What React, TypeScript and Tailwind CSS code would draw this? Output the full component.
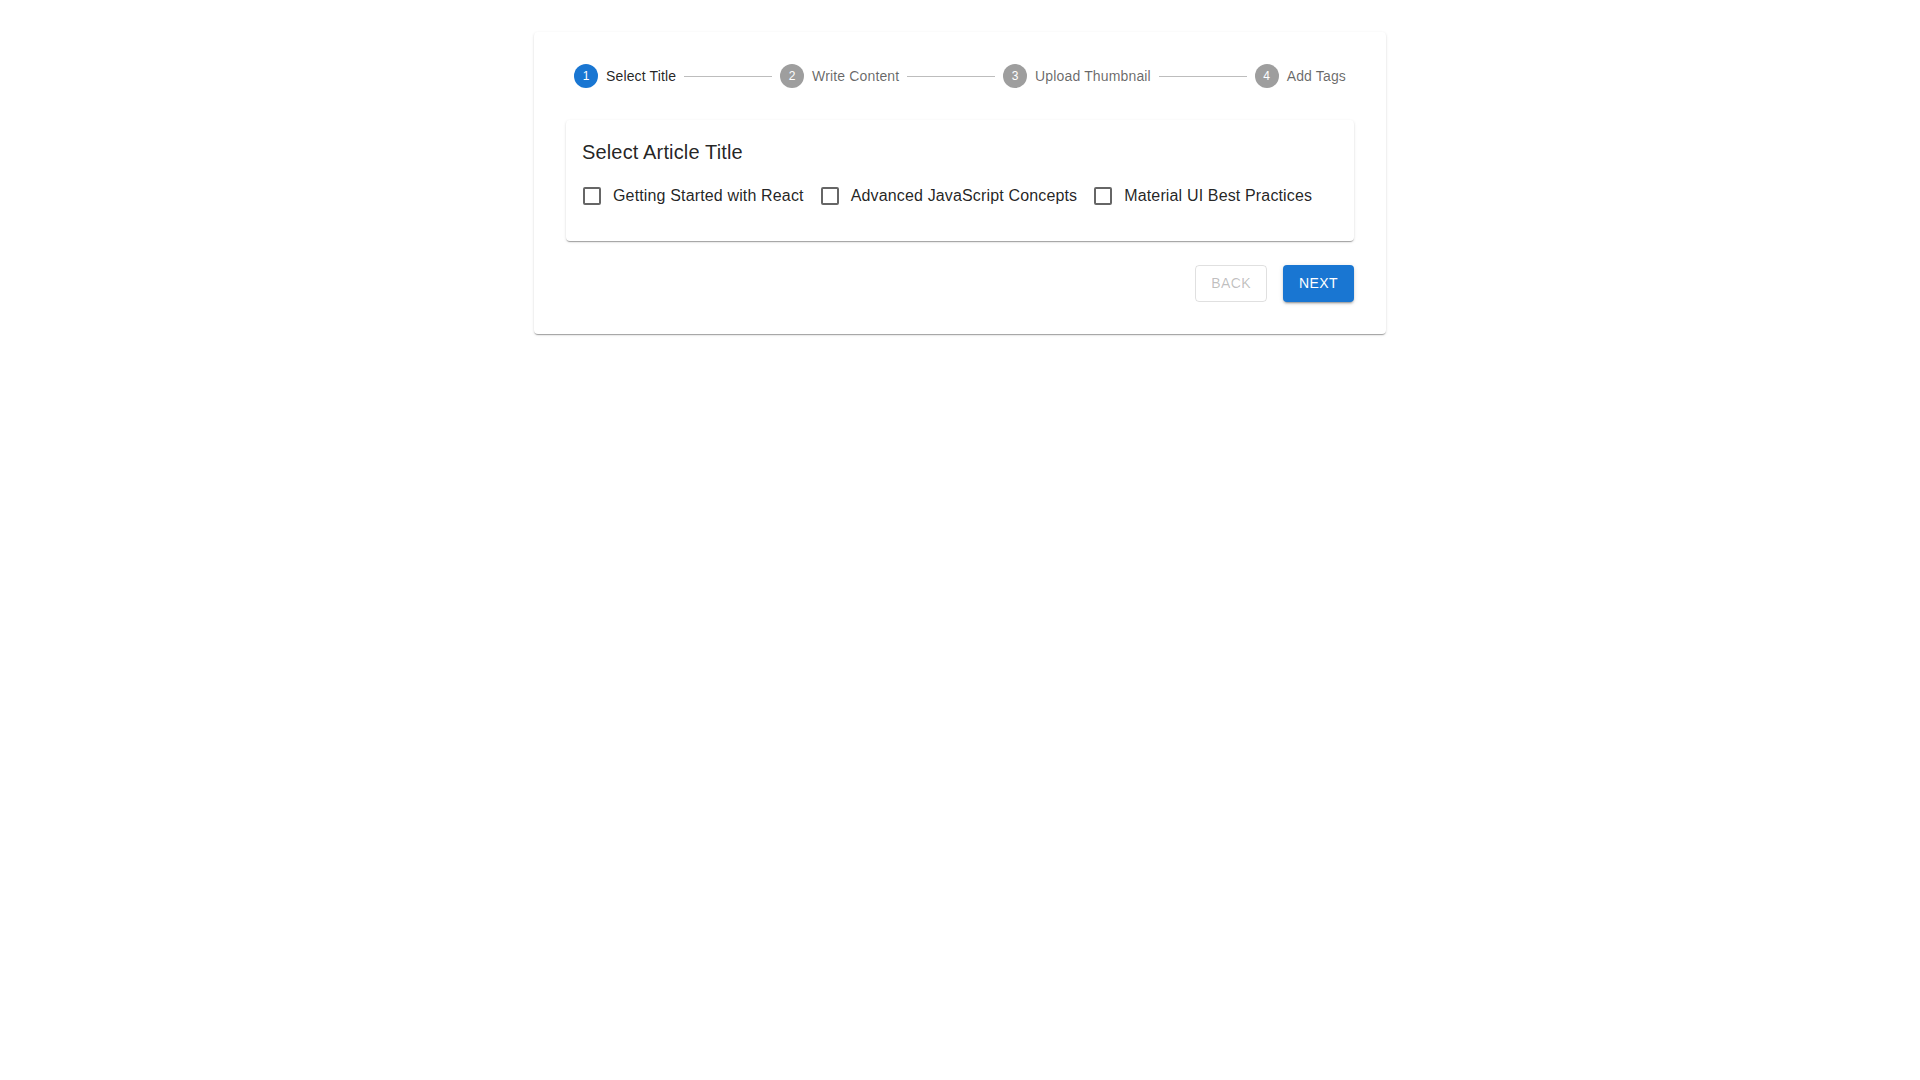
import { Fragment } from "react";

const steps = ["Select Title", "Write Content", "Upload Thumbnail", "Add Tags"];
const titles = [
  "Getting Started with React",
  "Advanced JavaScript Concepts",
  "Material UI Best Practices",
];

const Step = ({ index, label, active }: { index: number; label: string; active: boolean }) => (
  <div className="flex items-center px-2">
    <span
      className={`flex h-6 w-6 items-center justify-center rounded-full text-xs text-white ${
        active ? "bg-[#1976d2]" : "bg-[#9e9e9e]"
      }`}
    >
      {index}
    </span>
    <span
      className={`pl-2 text-sm leading-[1.43] tracking-[0.01071em] ${
        active ? "text-black/[0.87]" : "text-black/60"
      }`}
    >
      {label}
    </span>
  </div>
);

const TitleCheckbox = ({ label }: { label: string }) => (
  <label className="-ml-[11px] mr-4 flex cursor-pointer items-center">
    <span className="p-[9px]">
      <span className="flex h-6 w-6 items-center justify-center">
        <span className="h-[18px] w-[18px] rounded-[2px] border-2 border-black/60" />
      </span>
    </span>
    <span className="text-base leading-normal tracking-[0.00938em] text-black/[0.87]">{label}</span>
  </label>
);

export default function App() {
  return (
    <div className="min-h-screen bg-white font-['Liberation_Sans',Arial,sans-serif]">
      <div className="mx-auto w-[852px] pt-8">
        <div className="rounded bg-white p-8 shadow-[0px_2px_1px_-1px_rgba(0,0,0,0.2),0px_1px_1px_0px_rgba(0,0,0,0.14),0px_1px_3px_0px_rgba(0,0,0,0.12)]">
          <div className="flex items-center">
            {steps.map((s, i) => (
              <Fragment key={s}>
                <Step index={i + 1} label={s} active={i === 0} />
                {i < steps.length - 1 && <div className="h-px flex-1 bg-[#bdbdbd]" />}
              </Fragment>
            ))}
          </div>

          <div className="mt-8 rounded bg-white px-4 pb-6 pt-4 shadow-[0px_2px_1px_-1px_rgba(0,0,0,0.2),0px_1px_1px_0px_rgba(0,0,0,0.14),0px_1px_3px_0px_rgba(0,0,0,0.12)]">
            <h6 className="mb-[7px] text-[20px] font-normal leading-[1.6] tracking-[0.0075em] text-black/[0.87]">
              Select Article Title
            </h6>
            <div className="flex flex-wrap">
              {titles.map((t) => (
                <TitleCheckbox key={t} label={t} />
              ))}
            </div>
          </div>

          <div className="mt-6 flex justify-end gap-4">
            <button
              disabled
              className="rounded border border-black/[0.12] px-[15px] py-[5px] text-sm font-normal uppercase leading-[1.75] tracking-[0.02857em] text-black/[0.26]"
            >
              Back
            </button>
            <button className="rounded bg-[#1976d2] px-4 py-1.5 text-sm font-normal uppercase leading-[1.75] tracking-[0.02857em] text-white shadow-[0px_3px_1px_-2px_rgba(0,0,0,0.2),0px_2px_2px_0px_rgba(0,0,0,0.14),0px_1px_5px_0px_rgba(0,0,0,0.12)]">
              Next
            </button>
          </div>
        </div>
      </div>
    </div>
  );
}
